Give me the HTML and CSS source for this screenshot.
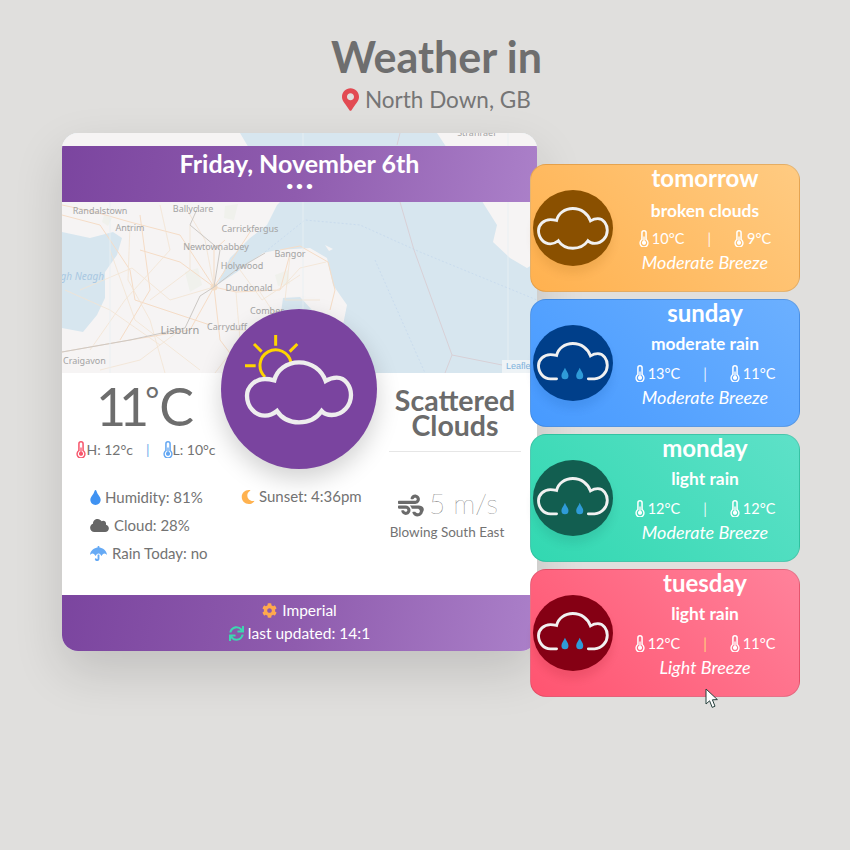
FILE: index.html
```html
<!DOCTYPE html>
<html lang="en">
<head>
    <meta charset="UTF-8">
    <meta name="viewport" content="width=device-width, initial-scale=1.0">
    <title>Weather</title>
    <link rel="stylesheet" href="styles.css">
</head>
<body>
    <!-- icon set -->
    <svg class="icon-defs" aria-hidden="true">
        <symbol id="i-marker" viewBox="0 0 384 512"><path d="M172.268 501.67C26.97 291.031 0 269.413 0 192 0 85.961 85.961 0 192 0s192 85.961 192 192c0 77.413-26.97 99.031-172.268 309.67-9.535 13.774-29.93 13.773-39.464 0zM192 272c44.183 0 80-35.817 80-80s-35.817-80-80-80-80 35.817-80 80 35.817 80 80 80z"/></symbol>
        <symbol id="i-tint" viewBox="0 0 352 512"><path d="M205.22 22.09c-7.94-28.78-49.44-30.12-58.44 0C100.01 179.85 0 222.72 0 333.91 0 432.35 78.72 512 176 512s176-79.65 176-178.09c0-111.75-99.79-153.34-146.78-311.82z"/></symbol>
        <symbol id="i-cloud" viewBox="0 0 640 512"><path d="M537.6 226.6c4.1-10.7 6.4-22.4 6.4-34.6 0-53-43-96-96-96-19.7 0-38.1 6-53.3 16.2C367 64.2 315.3 32 256 32c-88.4 0-160 71.6-160 160 0 2.7.1 5.4.2 8.1C40.2 219.8 0 273.2 0 336c0 79.5 64.5 144 144 144h368c70.7 0 128-57.3 128-128 0-61.9-44-113.6-102.4-125.4z"/></symbol>
        <symbol id="i-moon" viewBox="0 0 512 512"><path d="M283.211 512c78.947 0 151.256-35.957 199.167-94.811 7.078-8.699-.611-21.387-11.607-19.312-125.036 23.595-239.857-72.213-239.857-198.148 0-72.539 38.883-139.226 101.912-175.228 9.757-5.556 7.275-20.357-3.746-22.405A258.156 258.156 0 0 0 283.211 0c-141.309 0-256 114.511-256 256 0 141.309 114.511 256 256 256z"/></symbol>
        <symbol id="i-umbrella" viewBox="0 0 576 512"><path d="M575.7 280.8C547.1 144.5 437.3 62.6 320 49.9V32c0-17.7-14.3-32-32-32s-32 14.3-32 32v17.9C138.3 62.6 28.5 144.5.3 280.8c-2.2 10.1 8.5 21.3 18.7 11.4 52-55 107.7-52.4 158.6 37 5.3 9.5 14.9 8.6 19.7 0 20.2-35.4 44.9-73.2 90.7-73.2 58.5 0 88.2 68.8 90.7 73.2 4.8 8.6 14.4 9.5 19.7 0 51-89.5 107.1-91.4 158.6-37 10.3 10 20.9-1.3 18.7-11.4zM256 301.7V432c0 8.8-7.2 16-16 16-7.8 0-13.2-5.3-15.1-10.7-5.9-16.7-24.1-25.4-40.8-19.5-16.7 5.9-25.4 24.2-19.5 40.8 11.2 31.9 41.6 53.3 75.4 53.3 44.1 0 80-35.9 80-80V301.6c-9.1-7.9-19.8-13.6-32-13.6-12.3 0-23 5.8-32 13.7z"/></symbol>
        <symbol id="i-wind" viewBox="0 0 512 512"><path d="M156.7 256H16c-8.8 0-16 7.2-16 16v32c0 8.8 7.2 16 16 16h142.2c15.9 0 30.8 10.9 33.4 26.6 3.3 20-12.1 37.4-31.6 37.4-14.1 0-26.1-9.2-30.4-21.9-2.1-6.3-8.6-10.1-15.2-10.1H81.6c-9.8 0-17.7 8.8-15.9 18.4 8.6 44.1 47.6 77.6 94.2 77.6 57.1 0 102.7-50.1 95.2-108.6C249 291 205.4 256 156.7 256zM16 224h336c59.7 0 106.8-54.8 93.8-116.7-7.6-36.2-36.9-65.5-73.1-73.1-55.4-11.6-105.1 24.9-114.9 75.5-1.9 9.6 6.1 18.3 15.8 18.3h32.8c6.7 0 13.1-3.8 15.2-10.1C325.9 105.2 337.9 96 352 96c19.4 0 34.9 17.4 31.6 37.4-2.6 15.7-17.4 26.6-33.4 26.6H16c-8.8 0-16 7.2-16 16v32c0 8.8 7.2 16 16 16zm384 32H243.7c19.3 16.6 33.2 38.8 39.8 64H400c26.5 0 48 21.5 48 48s-21.5 48-48 48c-17.9 0-33.3-9.9-41.6-24.4-2.9-5-8.7-7.6-14.5-7.6h-33.8c-10.9 0-19 10.8-15.3 21.1 17.8 50.6 70.5 84.8 129.4 72.3 41.2-8.7 75.1-41.6 84.7-82.7C560.1 310.8 505.4 256 400 256z"/></symbol>
        <symbol id="i-cog" viewBox="0 0 512 512"><path d="M487.4 315.7l-42.6-24.6c4.3-23.2 4.3-47 0-70.2l42.6-24.6c4.9-2.8 7.1-8.6 5.5-14-11.1-35.6-30-67.8-54.7-94.6-3.8-4.1-10-5.1-14.8-2.3L380.8 110c-17.9-15.4-38.5-27.3-60.8-35.1V25.8c0-5.6-3.9-10.5-9.4-11.7-36.7-8.2-74.3-7.8-109.2 0-5.5 1.2-9.4 6.1-9.4 11.7V75c-22.2 7.9-42.8 19.8-60.8 35.1L88.7 85.5c-4.9-2.8-11-1.9-14.8 2.3-24.7 26.7-43.6 58.9-54.7 94.6-1.7 5.4.6 11.2 5.5 14L67.3 221c-4.3 23.2-4.3 47 0 70.2l-42.6 24.6c-4.9 2.8-7.1 8.6-5.5 14 11.1 35.6 30 67.8 54.7 94.6 3.8 4.1 10 5.1 14.8 2.3l42.6-24.6c17.9 15.4 38.5 27.3 60.8 35.1v49.2c0 5.6 3.9 10.5 9.4 11.7 36.7 8.2 74.3 7.8 109.2 0 5.5-1.2 9.4-6.1 9.4-11.7v-49.2c22.2-7.9 42.8-19.8 60.8-35.1l42.6 24.6c4.9 2.8 11 1.9 14.8-2.3 24.7-26.7 43.6-58.9 54.7-94.6 1.5-5.5-.7-11.3-5.6-14.1zM256 336c-44.1 0-80-35.9-80-80s35.9-80 80-80 80 35.9 80 80-35.9 80-80 80z"/></symbol>
        <symbol id="i-sync" viewBox="0 0 512 512"><path d="M440.65 12.57l4 82.77A247.16 247.16 0 0 0 255.83 8C134.73 8 33.91 94.92 12.29 209.82A12 12 0 0 0 24.09 224h49.05a12 12 0 0 0 11.67-9.26 175.91 175.91 0 0 1 317-56.94l-101.46-4.86a12 12 0 0 0-12.57 12v47.41a12 12 0 0 0 12 12H500a12 12 0 0 0 12-12V12a12 12 0 0 0-12-12h-47.37a12 12 0 0 0-11.98 12.57zM255.83 432a175.61 175.61 0 0 1-146-77.8l101.8 4.87a12 12 0 0 0 12.57-12v-47.4a12 12 0 0 0-12-12H12a12 12 0 0 0-12 12V500a12 12 0 0 0 12 12h47.35a12 12 0 0 0 12-12.6l-4.15-82.57A247.17 247.17 0 0 0 255.83 504c121.11 0 221.93-86.92 243.55-201.82a12 12 0 0 0-11.8-14.18h-49.05a12 12 0 0 0-11.67 9.26A175.86 175.86 0 0 1 255.83 432z"/></symbol>
        <symbol id="i-thermo" viewBox="0 0 10 18"><path fill-rule="evenodd" d="M2 3a3 3 0 0 1 6 0v6.9a4.9 4.9 0 1 1-6 0zM3.6 3v7.7a3.4 3.4 0 1 0 2.8 0V3a1.4 1.4 0 0 0-2.8 0z"/><path d="M4.3 7h1.4v4.4a2.2 2.2 0 1 1-1.4 0z"/></symbol>
        <symbol id="w-cloud" viewBox="90 165 325 195"><path class="cloud-line" d="M178,226 C185,195 215,172 252,172 C290,172 320,195 332,228 C345,220 360,218 365,218 C392,218 408,245 408,270 C408,300 385,330 350,330 C340,330 328,327 320,318 C305,340 280,352 252,352 C225,352 200,340 186,318 C175,327 160,332 150,332 C120,332 96,305 96,272 C96,245 120,222 150,222 C160,222 170,224 178,226 Z"/></symbol>
        <symbol id="w-rain" viewBox="90 165 325 195"><path class="cloud-line" d="M178,332 L150,332 C120,332 96,305 96,272 C96,245 120,222 150,222 C160,222 170,224 178,226 C185,195 215,172 252,172 C290,172 320,195 332,228 C345,220 360,218 365,218 C392,218 408,245 408,270 C408,300 385,330 350,332 L322,332"/><path class="rain-drop" d="M216,282 C222,298 232,306 232,318 A16,16 0 0 1 200,318 C200,306 210,298 216,282 Z"/><path class="rain-drop" d="M283,282 C289,298 299,306 299,318 A16,16 0 0 1 267,318 C267,306 277,298 283,282 Z"/></symbol>
    </svg>

    <header class="page-head">
        <h1>Weather in</h1>
        <p class="location"><svg class="ic ic-marker"><use href="#i-marker"/></svg> North Down, GB</p>
    </header>

    <main class="board">
        <section class="today">
            <div class="map-panel">
                <svg class="map" viewBox="62 133 475 240" preserveAspectRatio="none">
                    <rect class="sea" x="62" y="133" width="475" height="240"/>
                    <path class="land" d="M62 133H240L262 170L280 202L277 205L267 225L250 238L230 258L217 285L237 272L263 253L277 250L310 248L327 258L333 285L347 305L343 325L343 373H62V328L83 332L97 315L105 298L105 272L117 255L122 238L113 232L90 238L62 232Z"/>
                    <path class="sea" d="M283 298L300 297L312 310L300 330L280 320Z"/>
                    <path class="land" d="M437 133L480 198L497 225L493 242L510 258L527 268L537 262V133Z"/>
                    <path class="land" d="M325 245L333 249L329 251Z"/>
                    <circle class="city" cx="214" cy="287" r="3.5"/>
                    <path class="patch" d="M185 272L198 268L202 285L190 292Z"/>
                    <path class="patch" d="M225 206L238 204L234 220L224 218Z"/>
                    <path class="patch" d="M104 215L112 218L108 226L102 222Z"/>
                    <path class="patch" d="M275 275L288 270L290 284L278 286Z"/>
                    <g class="road-a">
                        <path d="M62 205L95 212L130 222L180 235L214 287L190 330L130 340L62 352"/>
                        <path d="M214 287L236 292L280 290L290 254"/>
                        <path d="M214 287L214 250L225 240"/>
                        <path d="M140 215L150 290L120 340"/>
                        <path d="M250 232L214 287"/>
                        <path d="M62 215L100 225L130 270L135 300L210 325"/>
                        <path d="M280 250L300 246L328 262L335 290L330 310"/>
                        <path d="M140 250L180 262L214 287L220 340L245 373"/>
                    </g>
                    <g class="road-b">
                        <path d="M130 225L128 280L150 320L165 373"/>
                        <path d="M214 287L170 300L132 268L80 290"/>
                        <path d="M236 292L240 340L215 373"/>
                        <path d="M280 290L300 268L326 262"/>
                        <path d="M260 292L285 330L230 330"/>
                        <path d="M187 210L205 240L214 287"/>
                        <path d="M100 370L140 360L180 330"/>
                        <path d="M160 205L170 250L125 300L90 350"/>
                        <path d="M290 256L285 300L320 300"/>
                        <path d="M150 300L190 270L190 225"/>
                        <path d="M110 250L135 320L200 370"/>
                        <path d="M240 270L262 300L300 275"/>
                        <path d="M65 290L110 310L160 345"/>
                    </g>
                    <g class="road-c">
                        <path d="M62 352L130 340L185 328L200 296L214 287"/>
                        <path d="M198 207L190 225L220 250L214 287"/>
                        <path d="M214 287L236 270L265 253"/>
                    </g>
                    <path class="border" d="M400 202L414 250L452 355L537 372M452 355L445 373M400 133L397 145"/>
                    <path class="ferry" d="M265 252L305 220L360 225L420 252L537 300M375 260L425 373"/>
                    <path class="grid" d="M110 202V373M303 133V373M508 133V373"/>
                    <g class="map-label">
                        <text x="100" y="214" text-anchor="middle">Randalstown</text>
                        <text x="193" y="212" text-anchor="middle">Ballyclare</text>
                        <text x="130" y="231" text-anchor="middle">Antrim</text>
                        <text x="250" y="232" text-anchor="middle">Carrickfergus</text>
                        <text x="216" y="250" text-anchor="middle">Newtownabbey</text>
                        <text x="290" y="257" text-anchor="middle">Bangor</text>
                        <text x="242" y="269" text-anchor="middle">Holywood</text>
                        <text x="249" y="291" text-anchor="middle">Dundonald</text>
                        <text x="267" y="314" text-anchor="middle">Comber</text>
                        <text x="227" y="330" text-anchor="middle">Carryduff</text>
                        <text class="map-town" x="180" y="334" text-anchor="middle">Lisburn</text>
                        <text x="63" y="364">Craigavon</text>
                        <text x="477" y="136" text-anchor="middle">Stranraer</text>
                        <text class="map-water" x="104" y="280" text-anchor="end">Lough Neagh</text>
                    </g>
                </svg>
                <span class="map-credit">Leaflet</span>
                <div class="day-bar">
                    <h2>Friday, November 6th</h2>
                    <span class="dots">&bull; &bull; &bull;</span>
                </div>
            </div>

            <div class="hero-icon">
                <svg viewBox="18 12 468 480" preserveAspectRatio="none">
                    <path class="sun-line" d="M150,216 A47,47 0 1 1 228,172 M182,90 V122 M117,117 L140,140 M247,117 L224,140 M90,182 H122"/>
                    <path class="hero-cloud" d="M178,226 C185,195 215,172 252,172 C290,172 320,195 332,228 C345,220 360,218 365,218 C392,218 408,245 408,270 C408,300 385,330 350,330 C340,330 328,327 320,318 C305,340 280,352 252,352 C225,352 200,340 186,318 C175,327 160,332 150,332 C120,332 96,305 96,272 C96,245 120,222 150,222 C160,222 170,224 178,226 Z"/>
                </svg>
            </div>

            <div class="today-body">
                <div class="today-left">
                    <div class="temp-block">
                        <div class="temp"><span class="temp-num">11</span><span class="deg">&deg;</span>C</div>
                        <div class="high-low">
                            <span><svg class="ic ic-thermo hot"><use href="#i-thermo"/></svg>H: 12&deg;c</span>
                            <span class="pipe">|</span>
                            <span><svg class="ic ic-thermo cold"><use href="#i-thermo"/></svg>L: 10&deg;c</span>
                        </div>
                    </div>
                    <div class="stats">
                        <ul class="stat-list">
                            <li><svg class="ic ic-tint"><use href="#i-tint"/></svg>Humidity: 81%</li>
                            <li><svg class="ic ic-cloud"><use href="#i-cloud"/></svg>Cloud: 28%</li>
                            <li><svg class="ic ic-umbrella"><use href="#i-umbrella"/></svg>Rain Today: no</li>
                        </ul>
                        <ul class="stat-list">
                            <li><svg class="ic ic-moon"><use href="#i-moon"/></svg>Sunset: 4:36pm</li>
                        </ul>
                    </div>
                </div>
                <div class="today-right">
                    <div class="condition">Scattered Clouds</div>
                    <div class="wind">
                        <div class="wind-speed"><svg class="ic ic-wind"><use href="#i-wind"/></svg>5 m/s</div>
                        <div class="wind-dir">Blowing South East</div>
                    </div>
                </div>
            </div>

            <footer class="today-foot">
                <div><svg class="ic ic-cog"><use href="#i-cog"/></svg> Imperial</div>
                <div><svg class="ic ic-sync"><use href="#i-sync"/></svg> last updated: 14:1</div>
            </footer>
        </section>

        <section class="forecast">
            <article class="fc-card fc-orange">
                <div class="fc-icon"><svg><use href="#w-cloud"/></svg></div>
                <div class="fc-text">
                    <h3>tomorrow</h3>
                    <p class="fc-desc">broken clouds</p>
                    <div class="fc-temps">
                        <span><svg class="ic ic-thermo"><use href="#i-thermo"/></svg>10&deg;C</span>
                        <span class="fc-pipe">|</span>
                        <span><svg class="ic ic-thermo"><use href="#i-thermo"/></svg>9&deg;C</span>
                    </div>
                    <p class="fc-wind">Moderate Breeze</p>
                </div>
            </article>
            <article class="fc-card fc-blue">
                <div class="fc-icon"><svg><use href="#w-rain"/></svg></div>
                <div class="fc-text">
                    <h3>sunday</h3>
                    <p class="fc-desc">moderate rain</p>
                    <div class="fc-temps">
                        <span><svg class="ic ic-thermo"><use href="#i-thermo"/></svg>13&deg;C</span>
                        <span class="fc-pipe">|</span>
                        <span><svg class="ic ic-thermo"><use href="#i-thermo"/></svg>11&deg;C</span>
                    </div>
                    <p class="fc-wind">Moderate Breeze</p>
                </div>
            </article>
            <article class="fc-card fc-green">
                <div class="fc-icon"><svg><use href="#w-rain"/></svg></div>
                <div class="fc-text">
                    <h3>monday</h3>
                    <p class="fc-desc">light rain</p>
                    <div class="fc-temps">
                        <span><svg class="ic ic-thermo"><use href="#i-thermo"/></svg>12&deg;C</span>
                        <span class="fc-pipe">|</span>
                        <span><svg class="ic ic-thermo"><use href="#i-thermo"/></svg>12&deg;C</span>
                    </div>
                    <p class="fc-wind">Moderate Breeze</p>
                </div>
            </article>
            <article class="fc-card fc-pink">
                <div class="fc-icon"><svg><use href="#w-rain"/></svg></div>
                <div class="fc-text">
                    <h3>tuesday</h3>
                    <p class="fc-desc">light rain</p>
                    <div class="fc-temps">
                        <span><svg class="ic ic-thermo"><use href="#i-thermo"/></svg>12&deg;C</span>
                        <span class="fc-pipe fc-pipe-warm">|</span>
                        <span><svg class="ic ic-thermo"><use href="#i-thermo"/></svg>11&deg;C</span>
                    </div>
                    <p class="fc-wind">Light Breeze</p>
                </div>
            </article>
        </section>
    </main>

    <!-- mouse pointer caught in the capture -->
    <svg class="pointer" viewBox="0 0 14 21"><path d="M1 1L1 16L4.6 12.8L7.2 19.4L10 18.2L7.4 11.8L12.4 11.6Z"/></svg>
</body>
</html>
```

FILE: styles.css
```css
* {
    box-sizing: border-box;
}

body {
    margin: 0;
    min-height: 100vh;
    background-color: #e0dfdd;
    color: #737373;
    font-family: 'Lato', 'Open Sans', sans-serif;
    position: relative;
}

h1, h2, h3, p, ul {
    margin: 0;
    padding: 0;
}

ul {
    list-style: none;
}

.icon-defs {
    position: absolute;
    width: 0;
    height: 0;
}

.ic {
    fill: currentColor;
    vertical-align: -2px;
    flex: none;
}

/* page title */
.page-head {
    height: 133px;
    padding: 32px 0 0 23px;
    text-align: center;
}

.page-head h1 {
    font-size: 43px;
    line-height: 50px;
    font-weight: 700;
    color: #6e6e6e;
}

.location {
    margin-top: 3px;
    font-size: 22.5px;
    line-height: 30px;
    font-weight: 400;
    color: #757575;
}

.ic-marker {
    width: 17px;
    height: 23px;
    color: #e24a52;
    vertical-align: -3px;
}

.board {
    display: flex;
    align-items: flex-start;
    padding-left: 62px;
    --purple: linear-gradient(100deg, #7b459f 0%, #8f5cae 50%, #ab80c9 100%);
}

/* today card */
.today {
    position: relative;
    width: 475px;
    height: 518px;
    flex: none;
    background-color: #fff;
    border-radius: 16px;
    overflow: hidden;
    box-shadow: 0 20px 50px rgba(0, 0, 0, 0.14);
}

.map-panel {
    position: relative;
    height: 240px;
    padding-top: 13px;
}

.map {
    position: absolute;
    top: 0;
    left: 0;
    width: 100%;
    height: 100%;
}

.sea {
    fill: #d7e6ef;
}

.land {
    fill: #f6f4f4;
}

.city {
    fill: #f3ddc4;
}

.patch {
    fill: #f0f1ec;
}

.map g path, .border, .ferry, .grid {
    fill: none;
}

.road-a path {
    stroke: #f5dcc6;
    stroke-width: 1;
}

.road-b path {
    stroke: #f3e3d2;
    stroke-width: 0.8;
}

.road-c path {
    stroke: #ccc8c4;
    stroke-width: 1;
}

.border {
    stroke: #d8d0d6;
    stroke-width: 1;
}

.ferry {
    stroke: #c3d7ec;
    stroke-width: 0.7;
    stroke-dasharray: 2 2;
}

.grid {
    stroke: #e9f0f4;
    stroke-width: 0.8;
}

.map-label {
    font-family: 'Noto Sans', 'Open Sans', sans-serif;
    font-size: 9px;
    fill: #a3a3a3;
}

.map-town {
    font-size: 11px;
    fill: #999;
}

.map-water {
    font-style: italic;
    fill: #a9c8e2;
    font-size: 10px;
}

.map-credit {
    position: absolute;
    right: 0;
    bottom: 0;
    width: 35px;
    height: 13px;
    padding-left: 4px;
    background-color: #eef3f6;
    color: #7fb2dc;
    font-family: 'Liberation Sans', sans-serif;
    font-size: 9px;
    line-height: 13px;
    overflow: hidden;
}

.day-bar {
    position: relative;
    height: 56px;
    padding-top: 3px;
    background: var(--purple);
    color: #fff;
    text-align: center;
}

.day-bar h2 {
    font-size: 25px;
    line-height: 28px;
    font-weight: 700;
}

.dots {
    display: block;
    margin-top: 2px;
    font-size: 12px;
    line-height: 14px;
    font-weight: 700;
}

.hero-icon {
    position: absolute;
    left: 159px;
    top: 176px;
    width: 156px;
    height: 160px;
    border-radius: 50%;
    background-color: #7a449f;
    box-shadow: 0 10px 24px rgba(0, 0, 0, 0.18);
    z-index: 2;
}

.hero-icon svg {
    display: block;
    width: 100%;
    height: 100%;
}

.sun-line {
    fill: none;
    stroke: #ffd500;
    stroke-width: 9;
}

.hero-cloud {
    fill: #7a449f;
    stroke: #eeeeee;
    stroke-width: 13;
}

.today-body {
    display: flex;
    height: 222px;
}

.today-left {
    width: 327px;
    flex: none;
}

.temp-block {
    width: 166px;
    text-align: center;
}

.temp {
    height: 66px;
    font-size: 52px;
    line-height: 66px;
    font-weight: 400;
    color: #6d6d6d;
    white-space: nowrap;
}

.temp-num {
    letter-spacing: -7px;
}

.deg {
    font-size: 34px;
    line-height: 0;
    margin-left: 3px;
    vertical-align: 14px;
}

.high-low {
    display: flex;
    justify-content: center;
    gap: 13px;
    margin-top: 1px;
    padding-left: 2px;
    font-size: 14px;
    line-height: 20px;
    white-space: nowrap;
}

.pipe {
    color: #73adeb;
}

.ic-thermo {
    width: 10px;
    height: 17px;
    vertical-align: -3px;
}

.hot {
    color: #f7566c;
}

.cold {
    color: #64a7f2;
}

.stats {
    display: flex;
    margin-top: 23px;
    padding-left: 28px;
    font-size: 15px;
    line-height: 28px;
}

.stats .stat-list:first-child {
    width: 151px;
}

.stats .stat-list:last-child {
    margin-top: -1px;
}

.ic-tint {
    width: 11px;
    height: 15px;
    margin-right: 4px;
    color: #3f92f2;
}

.ic-cloud {
    width: 19px;
    height: 15px;
    margin-right: 5px;
    color: #666;
}

.ic-umbrella {
    width: 17px;
    height: 15px;
    margin-right: 5px;
    color: #66aaf5;
}

.ic-moon {
    width: 14px;
    height: 14px;
    margin-right: 4px;
    color: #ffb24f;
}

.today-right {
    width: 132px;
    flex: none;
    text-align: center;
}

.condition {
    height: 79px;
    padding-top: 15px;
    border-bottom: 1px solid #e6e6e6;
    font-size: 28.5px;
    line-height: 25px;
    font-weight: 700;
    color: #6b6b6b;
}

.wind {
    margin: 33px 10px 0 -6px;
}

.wind-speed {
    font-size: 28px;
    line-height: 36px;
    font-weight: 100;
    color: #444;
    white-space: nowrap;
}

.ic-wind {
    width: 29px;
    height: 25px;
    margin-right: 4px;
    color: #6b6b6b;
    vertical-align: -4px;
}

.wind-dir {
    margin-top: 2px;
    font-size: 13.5px;
    line-height: 18px;
    white-space: nowrap;
}

.today-foot {
    height: 56px;
    padding-top: 4px;
    background: var(--purple);
    color: #fff;
    font-size: 15.5px;
    line-height: 23px;
    text-align: center;
}

.ic-cog {
    width: 15px;
    height: 15px;
    margin-right: 1px;
    color: #ffa94d;
}

.ic-sync {
    width: 15px;
    height: 15px;
    color: #3dd6b0;
}

/* forecast cards */
.forecast {
    position: relative;
    z-index: 3;
    display: flex;
    flex-direction: column;
    gap: 7px;
    width: 270px;
    flex: none;
    margin: 31px 0 0 -7px;
}

.fc-card {
    display: flex;
    align-items: center;
    height: 128px;
    padding: 0 3px;
    border-radius: 16px;
    border: 1px solid rgba(0, 0, 0, 0.1);
    color: #fff;
}

.fc-orange {
    background: linear-gradient(45deg, #ffb14f, #ffcb82);
}

.fc-blue {
    background: linear-gradient(45deg, #479aff, #6cb0ff);
}

.fc-green {
    background: linear-gradient(45deg, #32d8b1, #5ee1c8);
}

.fc-pink {
    background: linear-gradient(45deg, #ff5470, #ff829b);
}

.fc-icon {
    display: flex;
    align-items: center;
    justify-content: center;
    width: 80px;
    height: 76px;
    flex: none;
    margin-left: -1px;
    border-radius: 50%;
}

.fc-orange .fc-icon {
    background-color: #8a5000;
    box-shadow: 0 8px 8px rgba(138, 80, 0, 0.12);
}

.fc-blue .fc-icon {
    background-color: #003f8a;
    box-shadow: 0 8px 8px rgba(0, 63, 138, 0.12);
}

.fc-green .fc-icon {
    background-color: #125e50;
    box-shadow: 0 8px 8px rgba(18, 94, 80, 0.12);
}

.fc-pink .fc-icon {
    background-color: #850014;
    box-shadow: 0 8px 8px rgba(133, 0, 20, 0.12);
}

.fc-icon svg {
    width: 72px;
    height: 43px;
}

.cloud-line {
    fill: none;
    stroke: #f1f1f1;
    stroke-width: 13;
    stroke-linecap: round;
}

.rain-drop {
    fill: #2f9bd8;
}

.fc-text {
    flex: 1;
    align-self: flex-start;
    padding-left: 1px;
    text-align: center;
}

.fc-text h3 {
    margin-top: -1px;
    font-size: 24px;
    line-height: 28px;
    font-weight: 700;
}

.fc-desc {
    margin-top: 5px;
    font-size: 17.4px;
    line-height: 24px;
    font-weight: 700;
}

.fc-orange .fc-desc {
    margin-top: 7px;
}

.fc-temps {
    display: flex;
    justify-content: center;
    gap: 23px;
    margin-top: 6px;
    font-size: 14.5px;
    line-height: 24px;
    white-space: nowrap;
}

.fc-orange .fc-temps {
    margin-top: 4px;
}

.fc-temps .ic-thermo {
    margin-right: 3px;
}

.fc-pipe {
    opacity: 0.85;
}

.fc-pipe-warm {
    color: #ffe27a;
}

.fc-wind {
    margin-top: -1px;
    font-size: 18px;
    line-height: 24px;
    font-style: italic;
    font-weight: 400;
}

.pointer {
    position: absolute;
    left: 705px;
    top: 688px;
    width: 14px;
    height: 21px;
    z-index: 5;
}

.pointer path {
    fill: #fff;
    stroke: #25403c;
    stroke-width: 1;
}
```
